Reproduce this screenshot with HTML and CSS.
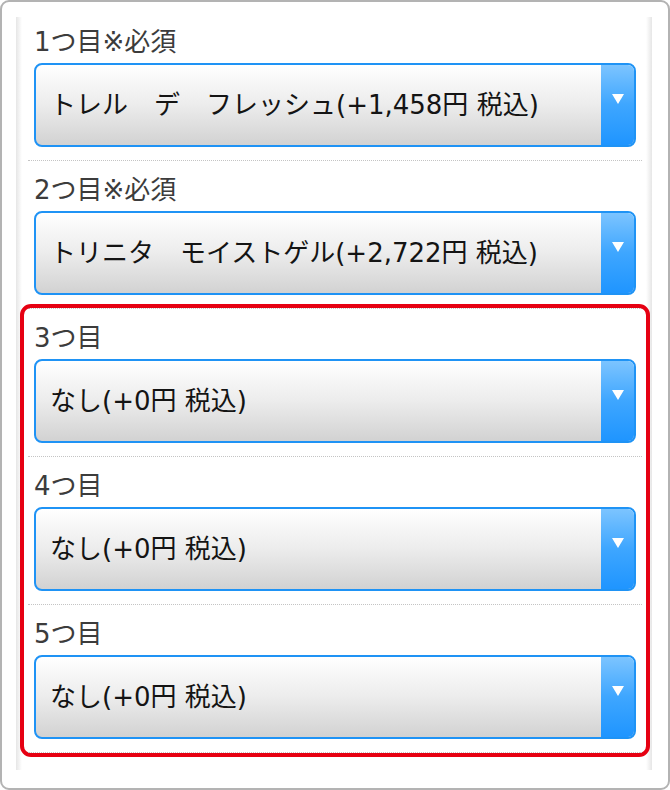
FILE: index.html
```html
<!DOCTYPE html>
<html lang="ja">
<head>
<meta charset="utf-8">
<title>選択</title>
<link rel="stylesheet" href="styles.css">
</head>
<body>
<div class="frame">
  <div class="column">
    <div class="item first">
      <div class="label">1つ目※必須</div>
      <div class="select"><span class="value">トレル　デ　フレッシュ(+1,458円 税込)</span><span class="arrow"><span class="tri"></span></span></div>
    </div>
    <div class="item">
      <div class="label">2つ目※必須</div>
      <div class="select"><span class="value">トリニタ　モイストゲル(+2,722円 税込)</span><span class="arrow"><span class="tri"></span></span></div>
    </div>
    <div class="optional">
      <div class="item">
        <div class="label">3つ目</div>
        <div class="select"><span class="value">なし(+0円 税込)</span><span class="arrow"><span class="tri"></span></span></div>
      </div>
      <div class="item">
        <div class="label">4つ目</div>
        <div class="select"><span class="value">なし(+0円 税込)</span><span class="arrow"><span class="tri"></span></span></div>
      </div>
      <div class="item">
        <div class="label">5つ目</div>
        <div class="select"><span class="value">なし(+0円 税込)</span><span class="arrow"><span class="tri"></span></span></div>
      </div>
    </div>
  </div>
</div>
</body>
</html>
```
FILE: styles.css
```css
html, body {
  margin: 0;
  padding: 0;
  background: #fff;
}
body {
  font-family: "DejaVu Sans", "Noto Sans CJK JP", sans-serif;
}
.frame {
  box-sizing: border-box;
  width: 670px;
  height: 790px;
  border: 2px solid #b3b3b3;
  border-radius: 9px;
  padding: 15px 16px 0 14px;
  background: #fff;
}
.column {
  background: linear-gradient(to right, #e6e6e6 0, #fff 6px, #fff calc(100% - 6px), #e6e6e6 100%);
  padding: 0 10px 13px 12px;
}
.item {
  padding: 12px 6px 13px;
  border-bottom: 1px dotted #c4c4c4;
}
.item.first {
  padding-top: 8px;
}
.label {
  font-size: 26px;
  line-height: 30px;
  color: #3c3c3c;
  padding-top: 2px;
  height: 28px;
}
.select {
  margin-top: 8px;
  box-sizing: border-box;
  height: 84px;
  border: 2px solid #1f93f5;
  border-radius: 8px;
  background: linear-gradient(to bottom, #ffffff 0%, #ececec 50%, #d2d2d2 100%);
  display: flex;
  align-items: center;
  overflow: hidden;
}
.value {
  flex: 1;
  padding-left: 14px;
  font-size: 26px;
  line-height: 30px;
  color: #141414;
  white-space: nowrap;
  overflow: hidden;
}
.arrow {
  width: 33px;
  align-self: stretch;
  background: linear-gradient(to bottom, #7cc4ff 0%, #3ea6ff 50%, #1f95ff 100%);
  display: flex;
  justify-content: center;
  align-items: flex-start;
  padding-top: 29px;
  box-sizing: border-box;
}
.tri {
  width: 0;
  height: 0;
  border-left: 6px solid transparent;
  border-right: 6px solid transparent;
  border-top: 10px solid #fff;
}
.optional {
  margin: -5px -8px 0;
  padding: 1px 4px 0;
  border: 4px solid #e60012;
  border-radius: 11px;
}
```
